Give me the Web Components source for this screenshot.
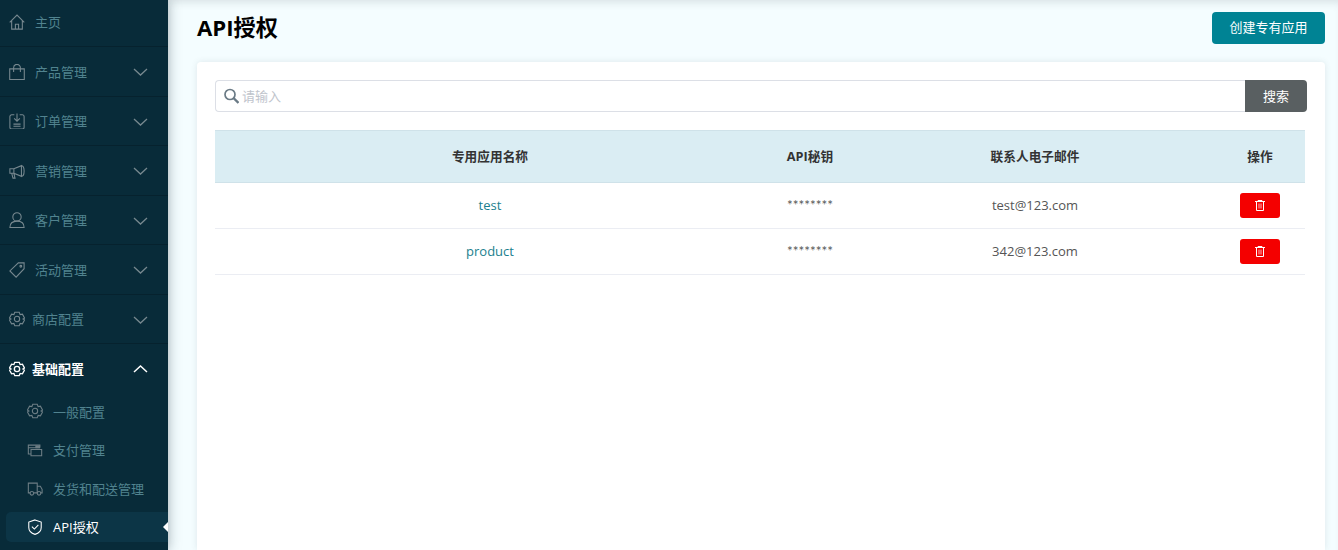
<!DOCTYPE html>
<html lang="zh">
<head>
<meta charset="utf-8">
<title>API授权</title>
<style>
  html,body{margin:0;height:100%;overflow:hidden;}
  body{font-family:"Open Sans","Noto Sans CJK SC",sans-serif;}
</style>
</head>
<body>
<app-shell>
  <side-nav slot="nav">
    <nav-item label="主页" icon="home" first></nav-item>
    <nav-item label="产品管理" icon="bag" arrow="down"></nav-item>
    <nav-item label="订单管理" icon="order" arrow="down"></nav-item>
    <nav-item label="营销管理" icon="horn" arrow="down"></nav-item>
    <nav-item label="客户管理" icon="user" arrow="down"></nav-item>
    <nav-item label="活动管理" icon="tag" arrow="down"></nav-item>
    <nav-item label="商店配置" icon="gear" arrow="down" tight></nav-item>
    <nav-item label="基础配置" icon="gear" arrow="up" tight open></nav-item>
    <nav-sub label="一般配置" icon="gear"></nav-sub>
    <nav-sub label="支付管理" icon="card"></nav-sub>
    <nav-sub label="发货和配送管理" icon="truck"></nav-sub>
    <nav-sub label="API授权" icon="shield" active></nav-sub>
  </side-nav>
  <page-header heading="API授权" action="创建专有应用"></page-header>
  <content-card>
    <search-bar placeholder="请输入" button="搜索"></search-bar>
    <app-table>
      <app-row head>
        <span>专用应用名称</span><span>API秘钥</span><span>联系人电子邮件</span><span>操作</span>
      </app-row>
      <app-row name="test" secret="********" email="test@123.com"></app-row>
      <app-row name="product" secret="********" email="342@123.com"></app-row>
    </app-table>
  </content-card>
</app-shell>
<script>
// stroke icons shared by the nav elements
const ICONS = {
  home: '<path d="M.8 9.500 9 1.200l8.200 8.300M3 7.500V17h12V7.500M7.200 17v-5.500h3.600V17"/>',
  bag: '<path d="M.8 5.500h16.400v12H.8zM5.200 9V4.200a3.800 3.800 0 0 1 7.600 0V9"/>',
  order: '<path d="M6 2H3a2 2 0 0 0-2 2v12a2 2 0 0 0 2 2h12a2 2 0 0 0 2-2V4a2 2 0 0 0-2-2h-3M9 .5V9M5.800 6 9 9.200 12.200 6M5 12.500h8M5 15h8"/>',
  horn: '<path d="M1 6.500h4.500v5H1zM5.500 6.500l8.500-3.500v12l-8.500-3.500M14 3c2 0 3 2.500 3 6s-1 6-3 6M3 11.500 4.500 17h2.300l-1.300-5"/>',
  user: '<circle cx="9" cy="5.500" r="4.700"/><path d="M1 17.500c0-4.500 3-7.200 8-7.200s8 2.700 8 7.200z"/>',
  tag: '<path d="M10.500 1H17v6.500L8 17 1 10z"/><circle cx="13.300" cy="4.800" r="1"/>',
  gear: '<path d="M6.500 1.500h5l1 2.500 2.600-.4 2.400 4.400-1.700 1 1.700 1-2.400 4.400-2.600-.4-1 2.500h-5l-1-2.500-2.600.4L.5 10l1.700-1-1.700-1 2.400-4.400 2.600.4z"/><circle cx="9" cy="9" r="3"/>',
  card: '<path d="M4 13.500H1.500v-10h13v3M1.500 6.500h13M4.500 8.500h12v7h-12z"/><path d="M10 4.500h4v2h-4z" fill="currentColor"/>',
  truck: '<path d="M3.500 14.500h-2v-11h10v11h-4M11.500 7h3.500l2 3.500v4h-1.500M11.500 14.500h1"/><circle cx="5.500" cy="15" r="2"/><circle cx="13.500" cy="15" r="2"/>',
  shield: '<path d="M9 1 16 3.500v6c0 3.500-3 6.500-7 7.800-4-1.300-7-4.300-7-7.800v-6z"/><path d="m5.500 8.500 2.800 2.800 4.500-4.600"/>'
};
const svgIcon = (name, size) =>
  `<svg width="${size}" height="${size}" viewBox="0 0 18 18" fill="none" stroke="currentColor" stroke-width="1.200">${ICONS[name]}</svg>`;

class AppShell extends HTMLElement {
  constructor() {
    super();
    this.attachShadow({ mode: "open" }).innerHTML = `
      <style>
        :host{display:flex;height:550px;width:100%;overflow:hidden;background:#f4fdff;}
        .main{flex:1;min-width:0;display:flex;flex-direction:column;padding:0 13px 0 29px;
          box-shadow:inset 0 7px 8px -5px rgba(60,70,80,.16);}
      </style>
      <slot name="nav"></slot>
      <div class="main"><slot></slot></div>`;
  }
}

class SideNav extends HTMLElement {
  constructor() {
    super();
    this.attachShadow({ mode: "open" }).innerHTML = `
      <style>
        :host{display:block;flex:none;width:168px;height:550px;background:#082b39;overflow:hidden;
          box-shadow:0 0 12px rgba(30,50,60,.38);position:relative;z-index:1;}
        .list{margin-top:-2.500px;}
      </style>
      <div class="list"><slot></slot></div>`;
  }
}

class NavItem extends HTMLElement {
  connectedCallback() {
    const arrow = this.getAttribute("arrow");
    const path = arrow === "up" ? "M1 8 7.500 2 14 8" : "M1 2 7.500 8 14 2";
    this.attachShadow({ mode: "open" }).innerHTML = `
      <style>
        :host{display:flex;align-items:center;box-sizing:border-box;height:49.500px;padding:0 20px 0 9px;
          border-bottom:1px solid #06222e;color:#51838f;font-size:13px;}
        :host([open]){border-bottom:0;color:#fff;height:52px;padding-bottom:3px;font-weight:700;}
        :host([open]) .icon,:host([open]) .arrow{color:#fff;}
        .icon{display:flex;width:16px;height:16px;margin:1px 10px 0 0;color:#77888f;}
        :host([tight]) .icon{margin-right:7px;}
        :host([open]) svg{stroke-width:1.500;}
        .label{flex:1;}
        .arrow{display:flex;color:#77888f;margin-top:2px;}
        :host([open]) .arrow{margin-top:0;}
      </style>
      <span class="icon">${svgIcon(this.getAttribute("icon"), 16)}</span>
      <span class="label">${this.getAttribute("label")}</span>
      ${arrow ? `<span class="arrow"><svg width="15" height="10" viewBox="0 0 15 10" fill="none" stroke="currentColor" stroke-width="1.300"><path d="${path}"/></svg></span>` : ""}`;
  }
}

class NavSub extends HTMLElement {
  connectedCallback() {
    this.attachShadow({ mode: "open" }).innerHTML = `
      <style>
        :host{display:flex;align-items:center;box-sizing:border-box;height:30px;margin:0 0 8.670px 6px;
          padding-left:21px;color:#51838f;font-size:13px;border-radius:5px 0 0 5px;position:relative;}
        :host([active]){background:#0c3546;color:#fff;}
        .icon{display:flex;width:16px;height:16px;margin-right:10px;color:#6d7e85;}
        :host([active]) .icon{color:#fff;}
        :host([active])::after{content:"";position:absolute;right:0;top:10px;border:5px solid transparent;
          border-right-color:#fff;border-left-width:0;}
      </style>
      <span class="icon">${svgIcon(this.getAttribute("icon"), 16)}</span>
      <span>${this.getAttribute("label")}</span>`;
  }
}

class PageHeader extends HTMLElement {
  connectedCallback() {
    this.attachShadow({ mode: "open" }).innerHTML = `
      <style>
        :host{display:flex;align-items:center;justify-content:space-between;height:56px;flex:none;margin-bottom:6px;}
        h1{margin:0;font-size:22.200px;font-weight:700;color:#000;line-height:30px;}
        button{font:inherit;font-size:13px;height:32px;width:113px;border:0;border-radius:4px;color:#fff;
          background:#008394;padding:0 0 3px;}
      </style>
      <h1>${this.getAttribute("heading")}</h1>
      <button>${this.getAttribute("action")}</button>`;
  }
}

class ContentCard extends HTMLElement {
  constructor() {
    super();
    this.attachShadow({ mode: "open" }).innerHTML = `
      <style>
        :host{display:block;flex:1;box-sizing:border-box;background:#fff;border-radius:4px 4px 0 0;
          padding:18px 20px 0 18px;box-shadow:0 0 6px rgba(60,70,80,.12);}
      </style>
      <slot></slot>`;
  }
}

class SearchBar extends HTMLElement {
  connectedCallback() {
    this.attachShadow({ mode: "open" }).innerHTML = `
      <style>
        :host{display:flex;height:32px;margin-bottom:18px;margin-right:-2px;font-size:13px;}
        .field{flex:1;display:flex;align-items:center;gap:3px;box-sizing:border-box;border:1px solid #dcdfe6;border-right:0;
          border-radius:4px 0 0 4px;padding:0 0 0 8px;color:#c0c4cc;}
        .field span{padding-bottom:2px;}
        .field svg{color:#6a7a85;}
        button{font:inherit;width:62px;border:0;border-radius:0 4px 4px 0;background:#595f61;color:#fff;padding:0 0 2px;}
      </style>
      <div class="field">
        <svg width="15" height="16" viewBox="0 0 15 16" fill="none" stroke="currentColor"><circle cx="6" cy="6.500" r="5" stroke-width="1.700"/><path d="m9.500 10 5 5" stroke-width="2.400"/></svg>
        <span>${this.getAttribute("placeholder")}</span>
      </div>
      <button>${this.getAttribute("button")}</button>`;
  }
}

class AppTable extends HTMLElement {
  constructor() {
    super();
    this.attachShadow({ mode: "open" }).innerHTML = `
      <style>:host{display:block;font-size:13px;}</style><slot></slot>`;
  }
}

class AppRow extends HTMLElement {
  connectedCallback() {
    const cells = this.hasAttribute("head") ? `<slot></slot>` : `
      <span class="name">${this.getAttribute("name")}</span>
      <span class="secret">${this.getAttribute("secret")}</span>
      <span>${this.getAttribute("email")}</span>
      <button aria-label="删除"><svg width="10" height="11" viewBox="0 0 10 11" fill="none" stroke="#fff"><path d="M0 1.500h10M3 1.500V.5h4v1M1.500 1.500v9h7v-9"/><path d="M4 3.500v5M6 3.500v5" stroke="#ffb0b8"/></svg></button>`;
    this.attachShadow({ mode: "open" }).innerHTML = `
      <style>
        :host{display:grid;grid-template-columns:550px 90px 360px 90px;align-items:center;justify-items:center;
          box-sizing:border-box;height:46px;padding-bottom:2px;border-bottom:1px solid #ebedf3;color:#555;}
        :host([head]){height:53px;background:#daedf3;border-top:1px solid #cfe2e9;border-bottom:1px solid #cfe2e9;
          color:#333;font-weight:700;font-size:12.700px;}
        .name{color:#1b7f8e;}
        .secret{font-family:Lato,"Open Sans",sans-serif;font-size:13.500px;padding-top:1px;}
        button{display:flex;align-items:center;justify-content:center;width:40px;height:25px;border:0;border-radius:3px;background:#f40000;padding:0;
          position:relative;top:1px;}
      </style>
      ${cells}`;
  }
}

customElements.define("app-shell", AppShell);
customElements.define("side-nav", SideNav);
customElements.define("nav-item", NavItem);
customElements.define("nav-sub", NavSub);
customElements.define("page-header", PageHeader);
customElements.define("content-card", ContentCard);
customElements.define("search-bar", SearchBar);
customElements.define("app-table", AppTable);
customElements.define("app-row", AppRow);
</script>
</body>
</html>
